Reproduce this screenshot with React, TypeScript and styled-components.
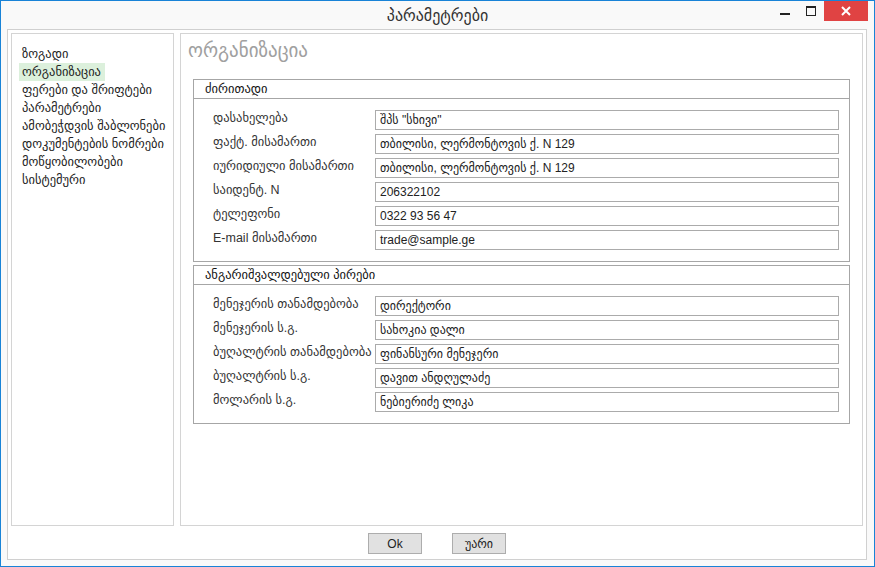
import React from 'react';
import styled, { createGlobalStyle } from 'styled-components';

const GlobalStyle = createGlobalStyle`
  html, body {
    margin: 0;
    padding: 0;
    background: #ffffff;
  }
  * {
    box-sizing: border-box;
  }
`;

const Window = styled.div`
  width: 875px;
  height: 567px;
  border: 1px solid #1883d7;
  background: #f9f9f9;
  display: flex;
  flex-direction: column;
  font-family: 'Liberation Sans', 'DejaVu Sans', sans-serif;
  color: #222;
`;

const TitleBar = styled.div`
  height: 28px;
  display: grid;
  grid-template-columns: 1fr auto 1fr;
  align-items: center;
`;

const Title = styled.div`
  grid-column: 2;
  font-size: 16px;
  color: #333;
  padding-top: 1px;
`;

const Controls = styled.div`
  grid-column: 3;
  justify-self: end;
  align-self: start;
  display: flex;
  margin-right: 6px;
`;

const CtrlButton = styled.div<{ $danger?: boolean }>`
  width: ${(p) => (p.$danger ? '44px' : '26px')};
  height: 20px;
  display: flex;
  align-items: center;
  justify-content: center;
  background: ${(p) => (p.$danger ? '#e04343' : 'transparent')};
`;

const Frame = styled.div`
  margin: 0 7px 0 6px;
  height: 531px;
  border: 1px solid #d0d0d0;
  background: #fff;
  display: flex;
  flex-direction: column;
  padding: 3px 3px 0 3px;
`;

const Panels = styled.div`
  display: flex;
  gap: 6px;
  height: 493px;
`;

const Panel = styled.div<{ $width?: number }>`
  border: 1px solid #d4d4d4;
  background: #fff;
  ${(p) => (p.$width ? `width: ${p.$width}px;` : 'flex: 1;')}
`;

const Menu = styled.div`
  display: flex;
  flex-direction: column;
  align-items: flex-start;
  padding: 11px 0 0 7px;
`;

const MenuItem = styled.div<{ $active?: boolean }>`
  height: 18px;
  line-height: 18px;
  padding: 0 4px 0 3px;
  font-size: 12.5px;
  color: #222;
  background: ${(p) => (p.$active ? '#dcf0dc' : 'transparent')};
`;

const Content = styled.div`
  padding: 4px 12px 0 12px;
  display: flex;
  flex-direction: column;
  gap: 3px;
`;

const Heading = styled.div`
  font-size: 19px;
  color: #a0a0a0;
  height: 38px;
  line-height: 26px;
  margin-left: -5px;
`;

const Group = styled.div`
  border: 1px solid #a6a6a6;
`;

const GroupHeader = styled.div`
  height: 19px;
  line-height: 18px;
  padding-left: 11px;
  font-size: 12.5px;
  color: #111;
  border-bottom: 1px solid #a6a6a6;
`;

const Rows = styled.div`
  padding: 11px 10px 11px 19px;
  display: flex;
  flex-direction: column;
  gap: 4px;
`;

const Row = styled.div`
  display: grid;
  grid-template-columns: 162px 1fr;
  align-items: start;
`;

const Label = styled.div`
  font-size: 12.5px;
  color: #333;
  line-height: 16px;
  white-space: nowrap;
`;

const Field = styled.div`
  height: 20px;
  border: 1px solid #ababab;
  padding: 0 4px;
  font-size: 12px;
  line-height: 18px;
  color: #222;
  white-space: nowrap;
  overflow: hidden;
`;

const Footer = styled.div`
  flex: 1;
  display: flex;
  justify-content: center;
  gap: 30px;
  padding-top: 7px;
`;

const Button = styled.div`
  width: 54px;
  height: 21px;
  border: 1px solid #adadad;
  background: #e1e1e1;
  font-size: 12px;
  color: #222;
  display: flex;
  align-items: center;
  justify-content: center;
`;

const menu = [
  'ზოგადი',
  'ორგანიზაცია',
  'ფერები და შრიფტები',
  'პარამეტრები',
  'ამობეჭდვის შაბლონები',
  'დოკუმენტების ნომრები',
  'მოწყობილობები',
  'სისტემური',
];

const mainRows: [string, string][] = [
  ['დასახელება', 'შპს "სხივი"'],
  ['ფაქტ. მისამართი', 'თბილისი, ლერმონტოვის ქ. N 129'],
  ['იურიდიული მისამართი', 'თბილისი, ლერმონტოვის ქ. N 129'],
  ['საიდენტ. N', '206322102'],
  ['ტელეფონი', '0322 93 56 47'],
  ['E-mail მისამართი', 'trade@sample.ge'],
];

const personRows: [string, string][] = [
  ['მენეჯერის თანამდებობა', 'დირექტორი'],
  ['მენეჯერის ს.გ.', 'სახოკია დალი'],
  ['ბუღალტრის თანამდებობა', 'ფინანსური მენეჯერი'],
  ['ბუღალტრის ს.გ.', 'დავით ანდღულაძე'],
  ['მოლარის ს.გ.', 'ნებიერიძე ლიკა'],
];

const FieldGroup: React.FC<{ title: string; rows: [string, string][] }> = ({ title, rows }) => (
  <Group>
    <GroupHeader>{title}</GroupHeader>
    <Rows>
      {rows.map(([label, value]) => (
        <Row key={label}>
          <Label>{label}</Label>
          <Field>{value}</Field>
        </Row>
      ))}
    </Rows>
  </Group>
);

const App: React.FC = () => {
  return (
    <>
      <GlobalStyle />
      <Window>
        <TitleBar>
          <Title>პარამეტრები</Title>
          <Controls>
            <CtrlButton>
              <svg width="10" height="10" viewBox="0 0 10 10">
                <rect x="0" y="7" width="10" height="2" fill="#222" />
              </svg>
            </CtrlButton>
            <CtrlButton>
              <svg width="10" height="10" viewBox="0 0 10 10">
                <rect x="0.5" y="0.5" width="9" height="9" fill="none" stroke="#222" />
                <rect x="0" y="0" width="10" height="2" fill="#222" />
              </svg>
            </CtrlButton>
            <CtrlButton $danger>
              <svg width="10" height="10" viewBox="0 0 10 10">
                <path d="M1 1 L9 9 M9 1 L1 9" stroke="#fff" strokeWidth="2" />
              </svg>
            </CtrlButton>
          </Controls>
        </TitleBar>
        <Frame>
          <Panels>
            <Panel $width={163}>
              <Menu>
                {menu.map((m, i) => (
                  <MenuItem key={m} $active={i === 1}>
                    {m}
                  </MenuItem>
                ))}
              </Menu>
            </Panel>
            <Panel>
              <Content>
                <Heading>ორგანიზაცია</Heading>
                <FieldGroup title="ძირითადი" rows={mainRows} />
                <FieldGroup title="ანგარიშვალდებული პირები" rows={personRows} />
              </Content>
            </Panel>
          </Panels>
          <Footer>
            <Button>Ok</Button>
            <Button>უარი</Button>
          </Footer>
        </Frame>
      </Window>
    </>
  );
};

export default App;
